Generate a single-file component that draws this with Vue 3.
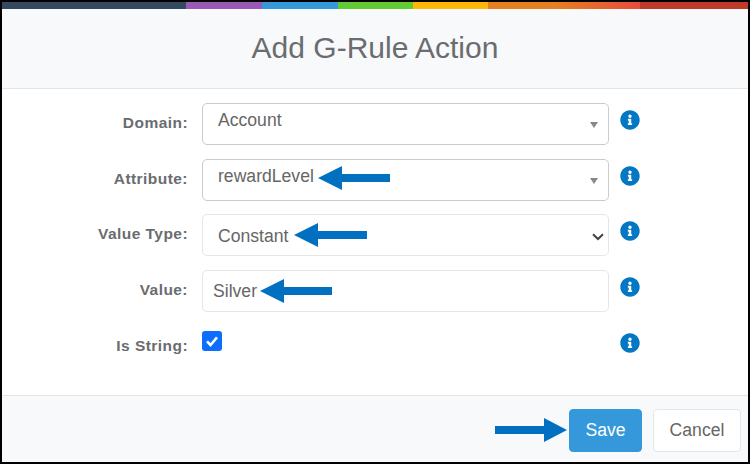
<template>
  <div class="modal">
    <div class="color-bar">
      <span v-for="seg in colorBar" :key="seg.name" :class="seg.name" :style="{ width: seg.width + 'px' }"></span>
    </div>

    <div class="modal-header">
      <h2>Add G-Rule Action</h2>
    </div>

    <div class="modal-body">
      <div v-for="row in rows" :key="row.label" class="form-row">
        <label>{{ row.label }}:</label>

        <div v-if="row.type === 'check'" class="check-wrap">
          <span class="checkbox">
            <svg width="14" height="14" viewBox="0 0 14 14">
              <path d="M2 7.4 5.5 11 12 3.4" fill="none" stroke="#fff" stroke-width="2.6" />
            </svg>
          </span>
        </div>
        <div v-else class="field" :class="row.type">
          <span>{{ row.value }}</span>
          <svg v-if="row.type === 'combo'" class="caret" width="10" height="6" viewBox="0 0 10 6">
            <path d="M1 0h8L5 6z" fill="#888" />
          </svg>
          <svg v-if="row.type === 'native'" class="chevron" width="12" height="8" viewBox="0 0 12 8">
            <path d="M1 1.2 6 6l5-4.8" fill="none" stroke="#444" stroke-width="2" />
          </svg>
        </div>

        <svg class="info" width="20" height="20" viewBox="0 0 512 512">
          <path
            fill="#0277c4"
            d="M256 8C119.043 8 8 119.083 8 256c0 136.997 111.043 248 248 248s248-111.003 248-248C504 119.083 392.957 8 256 8zm0 110c23.196 0 42 18.804 42 42s-18.804 42-42 42-42-18.804-42-42 18.804-42 42-42zm56 254c0 6.627-5.373 12-12 12h-88c-6.627 0-12-5.373-12-12v-24c0-6.627 5.373-12 12-12h12v-64h-12c-6.627 0-12-5.373-12-12v-24c0-6.627 5.373-12 12-12h64c6.627 0 12 5.373 12 12v100h12c6.627 0 12 5.373 12 12v24z"
          />
        </svg>
      </div>
    </div>

    <div class="modal-footer">
      <button class="btn save">Save</button>
      <button class="btn cancel">Cancel</button>
    </div>

    <!-- callout arrows drawn over the screenshot -->
    <svg class="arrows" width="750" height="464" viewBox="0 0 750 464">
      <polygon v-for="(pts, i) in arrows" :key="i" :points="pts" fill="#0170c1" />
    </svg>
  </div>
</template>

<script setup>
const colorBar = [
  { name: 'navy', width: 184 },
  { name: 'purple', width: 76 },
  { name: 'blue', width: 76 },
  { name: 'green', width: 75 },
  { name: 'yellow', width: 75 },
  { name: 'orange', width: 152 },
  { name: 'red', width: 108 }
];

const rows = [
  { label: 'Domain', value: 'Account', type: 'combo' },
  { label: 'Attribute', value: 'rewardLevel', type: 'combo' },
  { label: 'Value Type', value: 'Constant', type: 'native' },
  { label: 'Value', value: 'Silver', type: 'input' },
  { label: 'Is String', type: 'check' }
];

// left pointing arrow: tip x, head base x, tail x, centre y
const leftArrow = (tip, base, tail, y) =>
  `${tip},${y} ${base},${y - 12} ${base},${y - 4} ${tail},${y - 4} ${tail},${y + 4} ${base},${y + 4} ${base},${y + 12}`;

const arrows = [
  leftArrow(318, 342, 390, 178),
  leftArrow(294, 318, 367, 235),
  leftArrow(260, 284, 332, 291),
  '567,430 544,418 544,426 495,426 495,434 544,434 544,442'
];
</script>

<style>
html,
body {
  margin: 0;
  padding: 0;
  background: #fff;
}
</style>

<style scoped>
.modal {
  position: relative;
  width: 750px;
  height: 464px;
  box-sizing: border-box;
  border: 2px solid #000;
  background: #fff;
  display: flex;
  flex-direction: column;
  overflow: hidden;
  font-family: "Liberation Sans", Arial, sans-serif;
  color: #666;
}

.color-bar {
  display: flex;
  height: 7px;
  flex: none;
}
.color-bar span {
  display: block;
  flex: none;
}
.navy { background: #34495e; }
.purple { background: #9b59b6; }
.blue { background: #3498db; }
.green { background: #62cb31; }
.yellow { background: #ffb606; }
.orange { background: linear-gradient(90deg, #e67e22 45%, #e74c3c 100%); }
.red { background: #c0392b; }

.modal-header {
  flex: none;
  height: 79px;
  background: #f8f9fa;
  border-bottom: 1px solid #e2e4e6;
  display: flex;
  align-items: center;
  justify-content: center;
}
.modal-header h2 {
  margin: 0 0 1px;
  font-size: 30px;
  font-weight: 400;
  color: #6a6c6f;
}

.modal-body {
  flex: 1;
  padding-top: 14px;
  display: flex;
  flex-direction: column;
  gap: 13.67px;
}

.form-row {
  display: flex;
  height: 42px;
  align-items: flex-start;
}
.form-row label {
  flex: none;
  width: 186px;
  margin-top: 10px;
  text-align: right;
  font-size: 15.5px;
  line-height: 20px;
  font-weight: 700;
  letter-spacing: 0.45px;
  color: #6a6c6f;
}

.field {
  flex: none;
  position: relative;
  width: 407px;
  height: 42px;
  margin-left: 14px;
  box-sizing: border-box;
  border: 1px solid #dfe1e3;
  border-radius: 5px;
  font-size: 17.6px;
  line-height: 20px;
  color: #666;
}
.field.combo {
  border-color: #c9cbcd;
  padding: 6px 15px;
}
.field.native {
  padding: 11px 15px;
  border-color: #e4e6e8;
}
.field.input {
  padding: 10px 10px;
  border-color: #e4e6e8;
}

.caret {
  position: absolute;
  right: 9px;
  top: 18px;
}
.chevron {
  position: absolute;
  right: 4px;
  top: 18px;
}

.check-wrap {
  flex: none;
  width: 407px;
  margin-left: 14px;
  margin-top: 5px;
}
.checkbox {
  display: flex;
  align-items: center;
  justify-content: center;
  width: 20px;
  height: 20px;
  border-radius: 3px;
  background: #0d6efd;
}

.info {
  flex: none;
  margin-left: 11px;
  margin-top: 7px;
}

.modal-footer {
  flex: none;
  height: 67px;
  box-sizing: border-box;
  background: #f8f9fa;
  border-top: 1px solid #e2e4e6;
  padding: 13px 7px 0 0;
  display: flex;
  justify-content: flex-end;
  gap: 11px;
}
.btn {
  height: 43px;
  border-radius: 4px;
  font-family: inherit;
  font-size: 17.6px;
  box-sizing: border-box;
  padding: 0;
}
.save {
  width: 73px;
  background: #3498db;
  border: 1px solid #3498db;
  color: #fff;
}
.cancel {
  width: 88px;
  background: #fff;
  border: 1px solid #e4e6e8;
  color: #666;
}

.arrows {
  position: absolute;
  left: -2px;
  top: -2px;
  pointer-events: none;
}
</style>
